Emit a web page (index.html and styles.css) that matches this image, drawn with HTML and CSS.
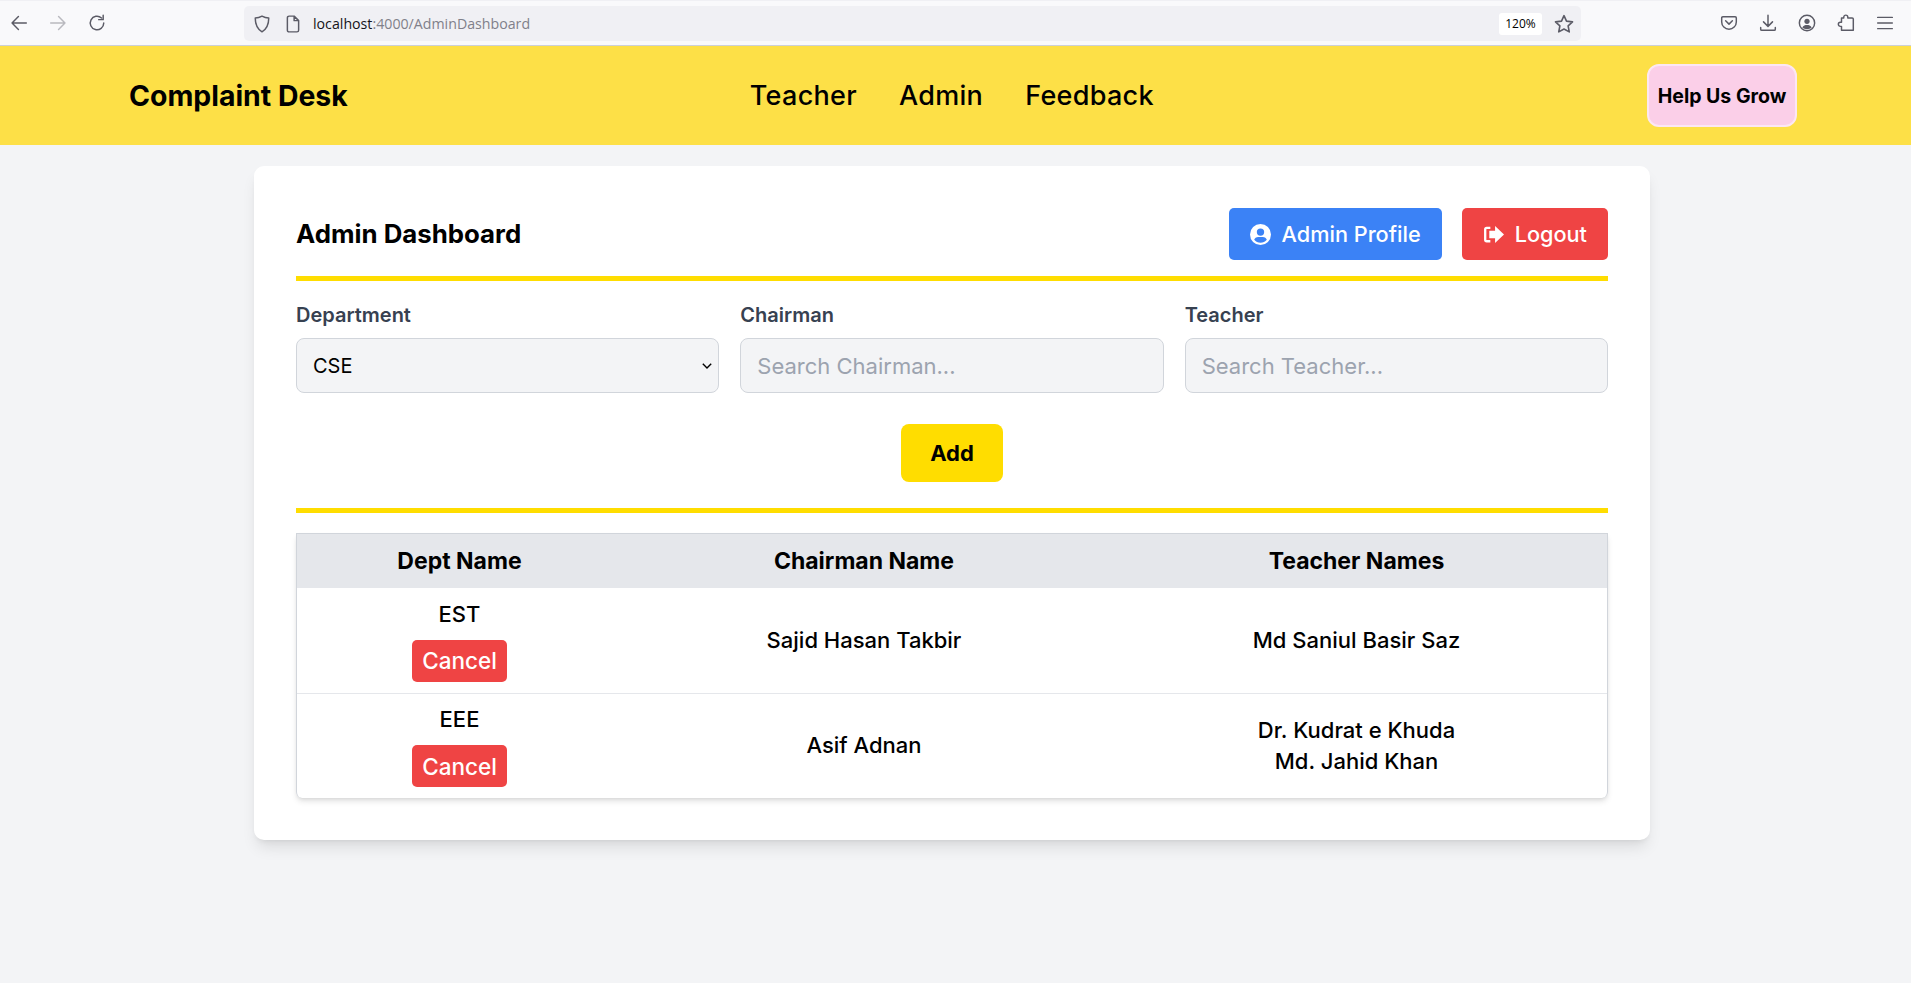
FILE: index.html
```html
<!DOCTYPE html>
<html lang="en">
<head>
  <meta charset="UTF-8" />
  <title>Complaint Desk</title>
  <link rel="stylesheet" href="styles.css">
</head>
<body>
<div class="toolbar">
  <div class="tool-group">
    <svg class="tool-icon" viewBox="0 0 16 16"><path d="M14.500 8H1.800M7.500 2.300L1.800 8l5.700 5.700"/></svg>
    <svg class="tool-icon dim" viewBox="0 0 16 16"><path d="M1.500 8h12.700M8.500 2.300L14.200 8l-5.700 5.700"/></svg>
    <svg class="tool-icon" viewBox="0 0 16 16"><path d="M14 8A6 6 0 1 1 12 3.500M13.500 1v4h-4"/></svg>
  </div>
  <div class="url-bar">
    <svg class="tool-icon" viewBox="0 0 16 16"><path d="M8 1c2 1.200 3.800 1.700 6 1.700 0 5.500-1 9.300-6 12.300C3 12 2 8.200 2 2.700 4.200 2.700 6 2.200 8 1z"/></svg>
    <svg class="tool-icon" viewBox="0 0 16 16"><path d="M3 2.500A1.500 1.500 0 0 1 4.500 1H9l4 4V13.500A1.500 1.500 0 0 1 11.500 15h-7A1.500 1.500 0 0 1 3 13.500zM9 1v4h4"/></svg>
    <div class="url-text">localhost<span class="url-path">:4000/AdminDashboard</span></div>
    <div class="zoom-level">120%</div>
    <svg class="tool-icon star" viewBox="0 0 16 16"><path d="M8 1.300l2 4.400 4.800.6-3.500 3.200.9 4.800L8 12l-4.200 2.300.9-4.800-3.500-3.200L6 5.700z"/></svg>
  </div>
  <div class="tool-group right">
    <svg class="tool-icon" viewBox="0 0 16 16"><path d="M2.500 2.500h11A1 1 0 0 1 14.500 3.500V7A6.500 6.500 0 0 1 1.500 7V3.500a1 1 0 0 1 1-1zM5 6l3 3 3-3"/></svg>
    <svg class="tool-icon" viewBox="0 0 16 16"><path d="M8 1v9.500M4 7l4 4 4-4M1.500 12v1.500a1 1 0 0 0 1 1h11a1 1 0 0 0 1-1V12"/></svg>
    <svg class="tool-icon" viewBox="0 0 16 16"><circle cx="8" cy="8" r="6.800"/><circle class="solid" cx="8" cy="6.500" r="2.300"/><path class="solid" d="M3.800 12c1-1.800 2.500-2.300 4.200-2.300s3.200.5 4.200 2.300c-2.300 2-6.100 2-8.400 0z"/></svg>
    <svg class="tool-icon" viewBox="0 0 16 16"><path d="M6 3.500V2.800a1.800 1.800 0 0 1 3.600 0v.7h3.900a1 1 0 0 1 1 1V14.500H4V11H3a1.800 1.800 0 0 1 0-3.600h1V3.500z"/></svg>
    <svg class="tool-icon" viewBox="0 0 16 16"><path d="M1.500 3h13M1.500 8h13M1.500 13h13"/></svg>
  </div>
</div>

<nav class="navbar">
  <div class="brand">Complaint Desk</div>
  <div class="nav-links">
    <a>Teacher</a>
    <a>Admin</a>
    <a>Feedback</a>
  </div>
  <button class="grow-btn">Help Us Grow</button>
</nav>

<main class="card">
  <div class="card-head">
    <h2>Admin Dashboard</h2>
    <div class="head-actions">
      <button class="btn blue">
        <svg class="btn-icon" viewBox="0 0 20 20"><path fill-rule="evenodd" d="M10 0a10 10 0 1 0 0 20 10 10 0 0 0 0-20zm0 4.200a3.500 3.500 0 1 1 0 7 3.500 3.500 0 0 1 0-7zm0 13.600c-2.400 0-4.500-1.100-6-2.800.4-1.600 2-2.700 3.800-2.700h4.400c1.800 0 3.400 1.100 3.800 2.700-1.500 1.700-3.600 2.800-6 2.800z"/></svg>
        Admin Profile
      </button>
      <button class="btn red">
        <svg class="btn-icon" viewBox="0 0 20 18"><path d="M20 9l-8.500-8v4.500H6v7h5.500V17z"/><path d="M7 1.500H3.500A2.500 2.500 0 0 0 1 4v10a2.500 2.500 0 0 0 2.500 2.500H7v-2.300H3.500a.3.300 0 0 1-.3-.2V4a.3.300 0 0 1 .3-.2H7z"/></svg>
        Logout
      </button>
    </div>
  </div>

  <div class="form-row">
    <div class="field">
      <label>Department</label>
      <div class="select-wrap">
        <select class="control"><option>CSE</option></select>
        <svg class="chevron" viewBox="0 0 10 6"><path d="M0.800 0.800L5 5l4.200-4.200"/></svg>
      </div>
    </div>
    <div class="field">
      <label>Chairman</label>
      <input class="control" placeholder="Search Chairman...">
    </div>
    <div class="field">
      <label>Teacher</label>
      <input class="control" placeholder="Search Teacher...">
    </div>
  </div>

  <div class="add-row">
    <button class="add-btn">Add</button>
  </div>

  <div class="table-wrap">
    <table>
      <thead>
        <tr>
          <th class="col-dept">Dept Name</th>
          <th class="col-chair">Chairman Name</th>
          <th>Teacher Names</th>
        </tr>
      </thead>
      <tbody>
        <tr>
          <td>
            <div>EST</div>
            <button class="cancel-btn">Cancel</button>
          </td>
          <td>Sajid Hasan Takbir</td>
          <td><div>Md Saniul Basir Saz</div></td>
        </tr>
        <tr>
          <td>
            <div>EEE</div>
            <button class="cancel-btn">Cancel</button>
          </td>
          <td>Asif Adnan</td>
          <td>
            <div>Dr. Kudrat e Khuda</div>
            <div>Md. Jahid Khan</div>
          </td>
        </tr>
      </tbody>
    </table>
  </div>
</main>
</body>
</html>
```

FILE: styles.css
```css
* {
  box-sizing: border-box;
}

body {
  margin: 0;
  height: 983px;
  overflow: hidden;
  background: #f3f4f6;
  font-family: Inter, "Open Sans", sans-serif;
  color: #000;
}

button {
  font-family: inherit;
  cursor: pointer;
}

/* browser chrome */
.toolbar {
  height: 46px;
  padding: 5px 0 0 0;
  display: flex;
  background: #f9f9fb;
  border-top: 1px solid #f0f0f4;
  border-bottom: 1px solid #ccd0d8;
}

.tool-icon {
  width: 18px;
  height: 18px;
  fill: none;
  stroke: #5b5b66;
  stroke-width: 1.3;
  stroke-linecap: round;
  stroke-linejoin: round;
  flex-shrink: 0;
}

.tool-icon.dim {
  stroke: #b9b9bf;
}

.tool-icon .solid {
  fill: #5b5b66;
  stroke: none;
}

.tool-group {
  width: 244px;
  height: 34px;
  padding-left: 10px;
  display: flex;
  align-items: center;
  gap: 21px;
}

.tool-group.right {
  width: 330px;
  padding-left: 139px;
  gap: 21px;
}

.url-bar {
  width: 1337px;
  height: 35px;
  padding: 0 7px 0 9px;
  display: flex;
  align-items: center;
  gap: 13px;
  background: #f0f0f4;
  border-radius: 5px;
}

.url-text {
  flex-grow: 1;
  font-family: "Open Sans", sans-serif;
  font-size: 14.200px;
  color: #15141a;
  margin-left: -2px;
}

.url-path {
  color: #80808a;
}

.zoom-level {
  width: 43px;
  height: 22px;
  line-height: 22px;
  text-align: center;
  font-family: "Open Sans", sans-serif;
  font-size: 12px;
  background: #fff;
  border-radius: 3px;
  margin-right: -1px;
}

.star {
  width: 20px;
  height: 20px;
}

/* nav */
.navbar {
  height: 99px;
  padding: 0 114px 0 129px;
  display: flex;
  align-items: center;
  justify-content: space-between;
  background: #fde047;
}

.brand {
  font-size: 28.400px;
  font-weight: 700;
}

.nav-links {
  display: flex;
  gap: 42px;
  font-size: 27px;
  font-weight: 500;
  letter-spacing: 0.3px;
  margin-left: -91px;
}

.grow-btn {
  width: 150px;
  height: 63px;
  padding: 0;
  font-size: 19.500px;
  font-weight: 700;
  color: #000;
  background: #fbcfe8;
  border: 2px solid #fce7f3;
  border-radius: 12px;
}

/* card */
.card {
  width: 1396px;
  height: 674px;
  margin: 21px 0 0 254px;
  padding: 42px;
  background: #fff;
  border-radius: 10px;
  box-shadow: 0 10px 15px -3px rgba(0,0,0,0.1), 0 4px 6px -4px rgba(0,0,0,0.1);
}

.card-head {
  height: 73px;
  padding-bottom: 16px;
  display: flex;
  align-items: center;
  justify-content: space-between;
  border-bottom: 5px solid #ffdd00;
}

h2 {
  margin: 0 0 2px 0;
  font-size: 25.800px;
  font-weight: 700;
}

.head-actions {
  display: flex;
  gap: 20px;
}

.btn {
  height: 52px;
  padding: 0 21px;
  display: flex;
  align-items: center;
  gap: 11px;
  font-size: 21.700px;
  font-weight: 500;
  color: #fff;
  border: none;
  border-radius: 5px;
}

.btn.blue {
  background: #3b82f6;
}

.btn.red {
  background: #ef4444;
}

.btn-icon {
  width: 21px;
  height: 21px;
  fill: #fff;
}

.form-row {
  margin-top: 22px;
  display: grid;
  grid-template-columns: repeat(3, 1fr);
  gap: 21px;
}

.field label {
  display: block;
  height: 35px;
  line-height: 24px;
  font-size: 20px;
  font-weight: 600;
  color: #374151;
}

.control {
  display: block;
  width: 100%;
  height: 55px;
  padding: 0 16px;
  font-family: inherit;
  font-size: 22px;
  color: #000;
  background: #f3f4f6;
  border: 1px solid #d1d5db;
  border-radius: 8px;
}

select.control {
  appearance: none;
  padding: 0 8px 0 16px;
  font-size: 20px;
}

.select-wrap {
  position: relative;
}

.chevron {
  position: absolute;
  right: 7px;
  top: 25px;
  width: 10px;
  height: 6px;
  fill: none;
  stroke: #000;
  stroke-width: 1.4;
}

.control::placeholder {
  color: #9ca3af;
}

.add-row {
  height: 120px;
  padding-top: 31px;
  display: flex;
  justify-content: center;
  border-bottom: 5px solid #ffdd00;
}

.add-btn {
  width: 102px;
  height: 58px;
  font-size: 22px;
  font-weight: 700;
  color: #000;
  background: #ffdd00;
  border: none;
  border-radius: 8px;
}

/* table */
.table-wrap {
  margin-top: 20px;
  border: 1px solid #d1d5db;
  border-bottom: none;
  border-radius: 0 0 6px 6px;
  box-shadow: 0 4px 6px -1px rgba(0,0,0,0.12), 0 2px 4px -2px rgba(0,0,0,0.1);
}

table {
  width: 100%;
  table-layout: fixed;
  border-collapse: collapse;
  font-size: 22px;
  font-weight: 500;
  text-align: center;
}

th {
  height: 54px;
  padding: 0;
  font-size: 23px;
  font-weight: 700;
  background: #e5e7eb;
}

.col-dept {
  width: 325px;
}

.col-chair {
  width: 484px;
}

td {
  height: 105px;
  padding: 0;
  line-height: 31px;
  border-bottom: 1px solid #e5e7eb;
}

tr:last-child td {
  border-bottom: none;
}

.cancel-btn {
  width: 95px;
  height: 42px;
  margin-top: 10px;
  padding: 0;
  font-size: 22.500px;
  font-weight: 500;
  color: #fff;
  background: #ef4444;
  border: none;
  border-radius: 5px;
  display: block;
  margin-left: auto;
  margin-right: auto;
}
```
